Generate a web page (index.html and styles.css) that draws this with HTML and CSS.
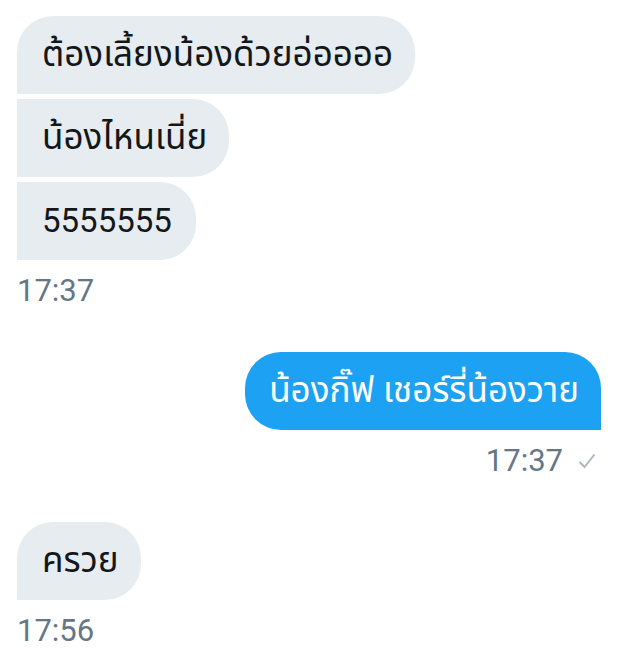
FILE: index.html
```html
<!DOCTYPE html>
<html lang="th">
<head>
<meta charset="utf-8">
<link rel="stylesheet" href="styles.css">
</head>
<body>
<div class="chat">
  <div class="group in">
    <div class="bubble in th">ต้องเลี้ยงน้องด้วยอ่ออออ</div>
    <div class="bubble in th">น้องไหนเนี่ย</div>
    <div class="bubble in">5555555</div>
    <div class="time">17:37</div>
  </div>
  <div class="group out">
    <div class="bubble out th">น้องกิ๊ฟ เชอร์รี่น้องวาย</div>
    <div class="time">17:37
      <svg class="check" viewBox="0 0 20 20" width="20" height="20"><path d="M2.5 11 L7.5 16 L17.5 3.5" fill="none" stroke="#aab8c2" stroke-width="2"/></svg>
    </div>
  </div>
  <div class="group in">
    <div class="bubble in th">ครวย</div>
    <div class="time">17:56</div>
  </div>
</div>
</body>
</html>
```
FILE: styles.css
```css
html, body {
  margin: 0;
  padding: 0;
  background: #ffffff;
}
body {
  font-family: Roboto, "Noto Sans Thai", "Noto Sans", sans-serif;
  width: 620px;
  height: 651px;
  overflow: hidden;
}
.chat {
  display: flex;
  flex-direction: column;
  gap: 41px;
  padding: 16px 17px 0 17px;
}
.group {
  display: flex;
  flex-direction: column;
  gap: 5px;
}
.group.in {
  align-items: flex-start;
}
.group.out {
  align-items: flex-end;
  padding-right: 2px;
}
.bubble {
  font-size: 33px;
  line-height: 46px;
  padding: 16px 24px 16px 25px;
  border-radius: 36px;
  white-space: nowrap;
}
.bubble.th {
  font-size: 35px;
  padding-right: 22px;
}
.bubble.in {
  background: #e6ecf0;
  color: #14171a;
  border-bottom-left-radius: 0;
}
.bubble.in + .bubble.in {
  border-top-left-radius: 0;
}
.bubble.out {
  background: #1da1f2;
  color: #ffffff;
  border-bottom-right-radius: 0;
  padding-left: 24px;
  padding-right: 22px;
}
.time {
  font-size: 31px;
  line-height: 40px;
  color: #657786;
  margin-top: 6px;
  display: flex;
  align-items: center;
  gap: 14px;
}
.group.out .time {
  padding-right: 4px;
}
.check {
  display: block;
}
```
